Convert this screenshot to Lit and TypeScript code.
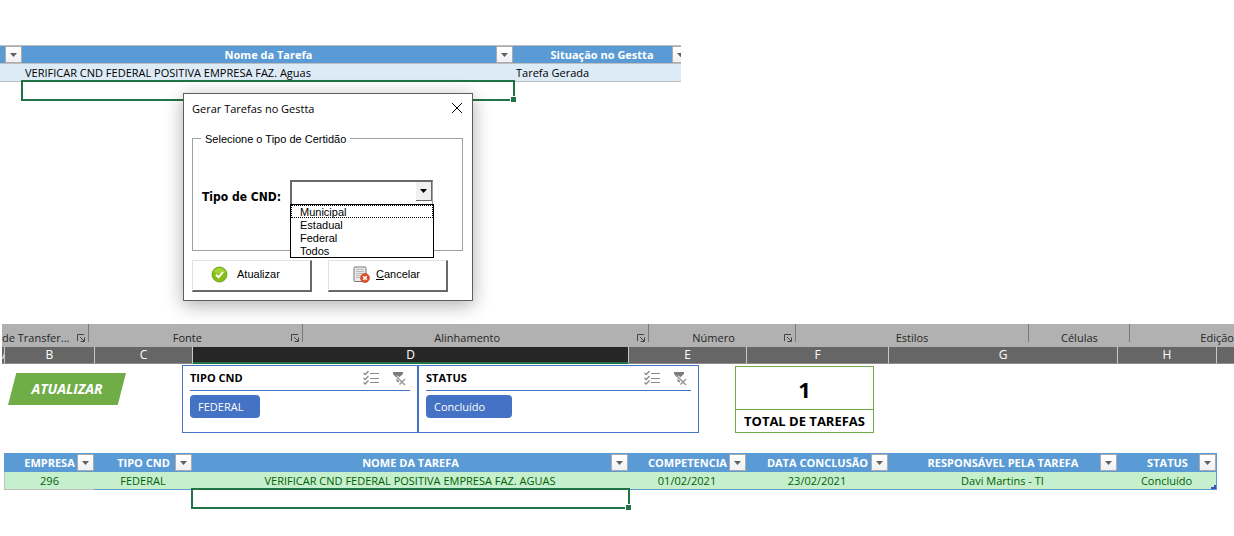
import { LitElement, html, css, svg, nothing } from "lit";
import { customElement, property } from "lit/decorators.js";

interface Column {
  label: string;
  value: string;
}

const taskColumns: Column[] = [
  { label: "EMPRESA", value: "296" },
  { label: "TIPO CND", value: "FEDERAL" },
  { label: "NOME DA TAREFA", value: "VERIFICAR CND FEDERAL POSITIVA EMPRESA FAZ. AGUAS" },
  { label: "COMPETENCIA", value: "01/02/2021" },
  { label: "DATA CONCLUSÃO", value: "23/02/2021" },
  { label: "RESPONSÁVEL PELA TAREFA", value: "Davi Martins - TI" },
  { label: "STATUS", value: "Concluído" },
];

const ribbonGroups = [
  { label: "de Transfer...", launcher: true },
  { label: "Fonte", launcher: true },
  { label: "Alinhamento", launcher: true },
  { label: "Número", launcher: true },
  { label: "Estilos", launcher: false },
  { label: "Células", launcher: false },
  { label: "Edição", launcher: false },
];

const cndTypes = ["Municipal", "Estadual", "Federal", "Todos"];

@customElement("filter-button")
class FilterButton extends LitElement {
  @property() label = "";
  static styles = css`
    :host { display: block; width: 17px; height: 17px; }
    button {
      display: flex; align-items: center; justify-content: center;
      width: 17px; height: 17px; padding: 0; box-sizing: border-box;
      border: 1px solid #ababab; background: linear-gradient(#ffffff, #f0f1f4);
    }
  `;
  render() {
    return html`<button aria-label="Filtrar ${this.label}">
      <svg width="7" height="4" viewBox="0 0 7 4"><path d="M0 0H7L3.5 4Z" fill="#606060" /></svg>
    </button>`;
  }
}

@customElement("cell-selection")
class CellSelection extends LitElement {
  static styles = css`
    :host {
      position: absolute; z-index: 1; inset: -2px -2px 0 -1px;
      border: 2px solid #217346; pointer-events: none;
    }
    .handle {
      position: absolute; right: -3px; bottom: -3px; width: 5px; height: 5px;
      background: #217346; border: solid #fff; border-width: 1px 0 0 1px;
    }
  `;
  render() {
    return html`<div class="handle"></div>`;
  }
}

@customElement("data-slicer")
class DataSlicer extends LitElement {
  @property() heading = "";
  @property() item = "";
  static styles = css`
    :host { display: block; box-sizing: border-box; border: 1px solid #4472c4; padding: 0 7px; background: #fff; }
    .head {
      display: flex; align-items: center; height: 24px; border-bottom: 1px solid #4472c4;
    }
    h2 { flex: 1; margin: 0; font-size: 11px; line-height: 24px; font-weight: 700; color: #000; }
    .tool { display: flex; border: 0; padding: 0; background: none; margin-right: 3px; }
    .tool + .tool { margin-left: 9px; }
    .chip {
      display: block; margin-top: 4px; height: 23px; padding: 0 17px 0 8px;
      border: 0; border-radius: 4px; background: #4472c4; color: #fff;
      font: inherit; font-size: 11px; text-align: left;
    }
    :host(.wide) .chip { padding-right: 27px; }
  `;
  render() {
    return html`
      <div class="head">
        <h2>${this.heading}</h2>
        <button class="tool" aria-label="Seleção múltipla">
          <svg width="16" height="16" viewBox="0 0 16 16" fill="none" stroke="#8a8a8a">
            <path d="M7 3.5H16M7 8.5H16M7 12.5H16" />
            <path d="M.5 3 2.2 4.5 5.5 1M.5 8 2.2 9.5 5.5 6M.5 12.5 2.2 14 5.5 10.5" stroke-width="1.3" />
          </svg>
        </button>
        <button class="tool" aria-label="Limpar filtro">
          <svg width="16" height="16" viewBox="0 0 16 16" fill="none">
            <path d="M2 2H12V4L8 7.500V13L5.500 11V8L2 4Z" fill="#7c7c7c" />
            <path d="M5.500 6.500 14 15M14 8 7.500 14.500" stroke="#fff" stroke-width="3" />
            <path d="M4.500 5.500 14 15M14 9 8.500 14.500" stroke="#9a9a9a" stroke-width="1.500" />
          </svg>
        </button>
      </div>
      <button class="chip" aria-pressed="true">${this.item}</button>
    `;
  }
}

@customElement("task-dialog")
class TaskDialog extends LitElement {
  static styles = css`
    :host {
      display: block; box-sizing: border-box; width: 290px; padding: 0 9px 8px 8px;
      border: 1px solid #5e5e5e; background: #fff; color: #000;
      box-shadow: 0 4px 18px rgba(0, 0, 0, 0.32);
      font-family: "Liberation Sans", Tahoma, sans-serif; font-size: 11px;
    }
    .title { display: flex; align-items: flex-start; justify-content: space-between; height: 38px; }
    h1 { margin: 0; font: 400 11px/30px "Open Sans", sans-serif; }
    .close { display: flex; padding: 0; margin-top: 8px; border: 0; background: none; }
    fieldset {
      margin: 0; padding: 35px 8px 46px; border: 1px solid #a0a0a0; min-width: 0;
    }
    legend { padding: 0 4px; line-height: 14px; height: 13px; }
    .field { display: grid; grid-template-columns: 89px 143px; height: 24px; }
    label {
      font-family: "DejaVu Sans Condensed", "DejaVu Sans", sans-serif;
      font-weight: 700; font-size: 12px; line-height: 34px; padding-left: 1px;
    }
    .combo { position: relative; display: flex; }
    select {
      flex: 1; appearance: none; border: 2px solid #696969; border-right: 1px solid #a0a0a0;
      border-bottom: 1px solid #a0a0a0; border-radius: 0; background: #fff; font: inherit;
    }
    .arrow {
      position: absolute; right: 1px; top: 2px; width: 15px; height: 18px;
      display: flex; align-items: center; justify-content: center; pointer-events: none;
      background: #f0f0f0; border: solid #696969; border-width: 0 1px 1px 0;
    }
    ul {
      position: absolute; left: 0; top: 24px; width: 142px; margin: 0; padding: 0;
      list-style: none; border: 1px solid #000; background: #fff;
    }
    li { height: 13px; line-height: 14px; padding-left: 9px; }
    li.current { outline: 1px dotted #000; outline-offset: -1px; }
    .actions { display: flex; gap: 16px; margin-top: 9px; }
    .action {
      display: flex; align-items: center; width: 120px; height: 32px; padding: 0 0 3px 18px; gap: 9px;
      box-sizing: border-box; background: #fff; color: #000; font: inherit;
      border: 2px solid; border-color: #e3e3e3 #696969 #696969 #e3e3e3; border-width: 1px 2px 2px 1px;
    }
    .cancel { padding-left: 24px; gap: 6px; }
  `;
  render() {
    return html`
      <div class="title">
        <h1>Gerar Tarefas no Gestta</h1>
        <button class="close" aria-label="Fechar">
          <svg width="12" height="12" viewBox="0 0 12 12" stroke="#000">
            <path d="M1 1 11 11M11 1 1 11" />
          </svg>
        </button>
      </div>
      <fieldset>
        <legend>Selecione o Tipo de Certidão</legend>
        <div class="field">
          <label for="cnd">Tipo de CND:</label>
          <div class="combo">
            <select id="cnd">
              <option value="" selected></option>
              ${cndTypes.map((t) => html`<option>${t}</option>`)}
            </select>
            <span class="arrow"><svg width="7" height="4" viewBox="0 0 7 4"><path d="M0 0H7L3.500 4Z" /></svg></span>
            <ul role="listbox" aria-label="Tipo de CND">
              ${cndTypes.map((t, i) => html`<li role="option" class=${i === 0 ? "current" : ""}>${t}</li>`)}
            </ul>
          </div>
        </div>
      </fieldset>
      <div class="actions">
        <button class="action">
          <svg width="17" height="17" viewBox="0 0 17 17">
            <circle cx="8.5" cy="8.5" r="7.5" fill="#86bd16" stroke="#5f9a10" stroke-width=".8" />
            <path d="M2.500 6A6.500 6.500 0 0 1 14.500 6Q8.500 9 2.500 6Z" fill="#a5d436" />
            <path d="M5 8.700 7.500 11.200 12 6.200" fill="none" stroke="#fff" stroke-width="2" />
          </svg>
          <span>Atualizar</span>
        </button>
        <button class="action cancel">
          <svg width="17" height="17" viewBox="0 0 17 17">
            <rect x="1" y="1" width="12" height="14.500" rx="1" fill="#ececec" stroke="#777" />
            <path d="M3 3.500H11M3 5.500H11M3 7.500H11M3 9.500H8M3 11.500H7" stroke="#bbb" />
            <circle cx="12" cy="12" r="4.500" fill="#e2522b" stroke="#b93a1c" stroke-width=".6" />
            <path d="M10.200 10.200 13.800 13.800M13.800 10.200 10.200 13.800" stroke="#fff" stroke-width="1.500" />
          </svg>
          <span><u>C</u>ancelar</span>
        </button>
      </div>
    `;
  }
}

@customElement("app-root")
class AppRoot extends LitElement {
  static styles = css`
    :host {
      display: block; min-height: 100vh; background: #fff; color: #000; overflow: hidden;
      font-family: "Open Sans", "Noto Sans", sans-serif; font-size: 11px;
    }
    table, thead, tbody { display: block; }
    tr { display: grid; }
    th, td { position: relative; padding: 0; box-sizing: border-box; white-space: nowrap; min-width: 0; }
    th { background: #5b9bd5; color: #fff; font-weight: 700; }
    filter-button { position: absolute; right: 0; top: 1px; }

    .upper { display: grid; grid-template-columns: 681fr 553fr; padding-top: 45px; }
    .crop { overflow: hidden; }
    .generated { width: calc(100% * 689 / 681); }
    .generated tr { grid-template-columns: 22fr 492fr 175fr; }
    .generated th { height: 19px; line-height: 18px; padding-left: 1px; border: solid #bfbfbf; border-width: 1px 0; }
    .generated th filter-button { top: 0; }
    .generated th:nth-child(2) filter-button { right: 1px; }
    .generated .row td { height: 18px; line-height: 17px; padding-left: 2px; background: #ddebf7; border-bottom: 1px solid #bfbfbf; }
    .generated .row td:nth-child(2) { padding-left: 3px; }
    .generated .next td { height: 21px; }
    .generated cell-selection { right: -1px; bottom: 2px; }
    .next td { height: 19px; }
    task-dialog { margin: -10px 0 23px 183px; position: relative; z-index: 2; }

    .ribbon {
      display: grid; grid-template-columns: 87fr 214fr 346fr 147fr 234fr 101fr 103fr;
      margin-left: 2px; height: 23px; background: #b1b1b1; color: #262626;
    }
    .group { display: flex; height: 18px; border-right: 1px solid #7a7a7a; }
    .group:last-child { border: 0; padding-left: 70px; }
    .group span { flex: 1; text-align: center; line-height: 28px; white-space: nowrap; }
    .group:first-child span { text-align: left; }
    .launcher { display: flex; padding: 0; margin: 10px 3px 0 5px; width: 8px; height: 8px; border: 0; background: none; }

    .letters {
      display: grid; grid-template-columns: 3fr 90fr 98fr 436fr 118fr 142fr 229fr 99fr 17fr;
      margin-left: 2px; font-size: 12px; line-height: 16px; color: #fff; text-align: center;
    }
    .letters div {
      height: 17px; box-sizing: border-box; overflow: hidden; background: #666;
      border-right: 1px solid #c8c8c8; border-bottom: 1px solid #8c8c8c;
    }
    .letters .active { background: #262626; border-bottom: 2px solid #217346; }
    .letters div:last-child { border-right: 0; }

    .panel {
      display: grid; grid-template-columns: 182fr 236fr 281fr 36fr 139fr 360fr;
      padding: 1px 0 20px; height: 68px;
    }
    .update {
      justify-self: start; margin: 8px 0 0 8px; width: 118px; height: 32px; border: 0; padding: 0;
      background: #70ad47; color: #fff; clip-path: polygon(7% 0, 100% 0, 93% 100%, 0 100%);
      font: italic 700 14px/30px "Open Sans", sans-serif;
    }
    .total {
      grid-column: 5; margin-top: 1px; display: grid; grid-template-rows: 43px 1fr;
      border: 1px solid #70ad47; text-align: center; font-weight: 700;
    }
    .count { font-size: 22px; line-height: 44px; border-bottom: 1px solid #70ad47; }
    .caption { font-size: 13px; line-height: 22px; white-space: nowrap; }

    .tasks { margin-right: calc(100% * 17 / 1234); margin-left: 4px; text-align: center; }
    .tasks tr { grid-template-columns: 90fr 98fr 436fr 118fr 142fr 229fr 100fr; }
    .tasks th { height: 19px; line-height: 19px; padding-left: 1px; }
    .tasks th:last-child filter-button { right: 1px; }
    .tasks .row td { height: 18px; line-height: 17px; background: #c6efce; color: #006100; border-bottom: 1px solid #5b9bd5; }
    .tasks .row td:first-child { border-left: 1px solid #bfbfbf; border-bottom-color: #bfbfbf; }
    .tasks .row td:last-child { border-right: 1px solid #5b9bd5; }
    .corner { position: absolute; right: 0; bottom: 0; }
  `;

  render() {
    return html`
      <section class="upper">
        <div class="crop-area">
          <div class="crop">
            <table class="generated">
              <thead>
                <tr>
                  <th><filter-button></filter-button></th>
                  <th>Nome da Tarefa<filter-button label="Nome da Tarefa"></filter-button></th>
                  <th>Situação no Gestta<filter-button label="Situação no Gestta"></filter-button></th>
                </tr>
              </thead>
              <tbody>
                <tr class="row">
                  <td></td>
                  <td>VERIFICAR CND FEDERAL POSITIVA EMPRESA FAZ. Aguas</td>
                  <td>Tarefa Gerada</td>
                </tr>
                <tr class="next"><td></td><td><cell-selection></cell-selection></td><td></td></tr>
              </tbody>
            </table>
          </div>
          <task-dialog role="dialog" aria-label="Gerar Tarefas no Gestta"></task-dialog>
        </div>
      </section>

      <nav class="ribbon">
        ${ribbonGroups.map((g) => html`
          <div class="group">
            <span>${g.label}</span>
            ${g.launcher
              ? html`<button class="launcher" aria-label="Abrir ${g.label}">
                  <svg width="8" height="8" viewBox="0 0 8 8" fill="none" stroke="#444">
                    ${svg`<path d="M.5 7V.5H7M3 3 7 7M7.500 3.500V7.500H3.500" />`}
                  </svg>
                </button>`
              : nothing}
          </div>`)}
      </nav>
      <div class="letters">
        ${["A", "B", "C", "D", "E", "F", "G", "H", ""].map(
          (l) => html`<div class=${l === "D" ? "active" : ""}>${l}</div>`
        )}
      </div>

      <section class="panel">
        <button class="update">ATUALIZAR</button>
        <data-slicer heading="TIPO CND" item="FEDERAL"></data-slicer>
        <data-slicer class="wide" heading="STATUS" item="Concluído"></data-slicer>
        <div class="total">
          <div class="count">1</div>
          <div class="caption">TOTAL DE TAREFAS</div>
        </div>
      </section>

      <table class="tasks">
        <thead>
          <tr>${taskColumns.map((c) => html`<th>${c.label}<filter-button label=${c.label}></filter-button></th>`)}</tr>
        </thead>
        <tbody>
          <tr class="row">
            ${taskColumns.map((c, i) => html`<td>${c.value}${i === taskColumns.length - 1
              ? html`<svg class="corner" width="5" height="4" viewBox="0 0 5 4"><path d="M3 0H5V4H0V2H3Z" fill="#3f51b5" /></svg>`
              : nothing}</td>`)}
          </tr>
          <tr class="next">${taskColumns.map((_, i) => html`<td>${i === 2 ? html`<cell-selection></cell-selection>` : nothing}</td>`)}</tr>
        </tbody>
      </table>
    `;
  }
}
